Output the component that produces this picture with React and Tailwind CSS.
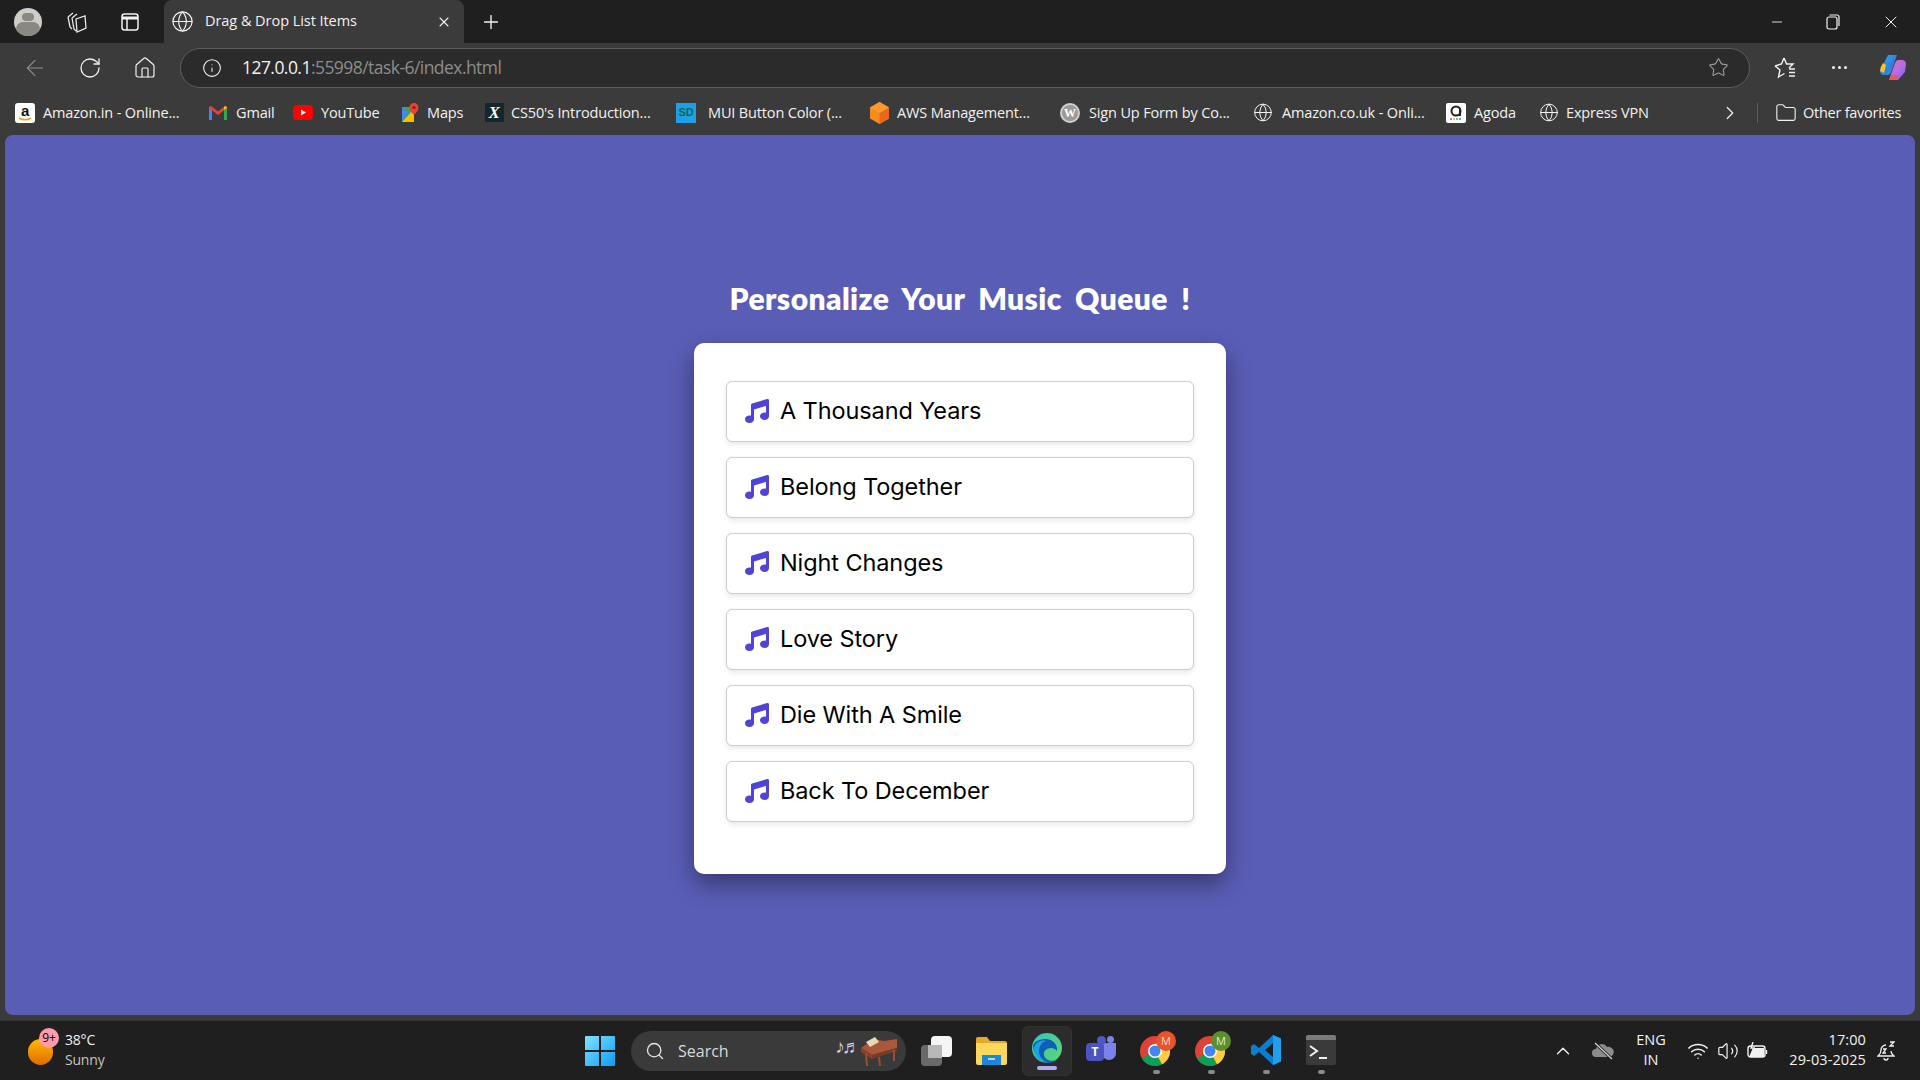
import { ArrowLeft, RotateCw, Home, Info, Star, Globe, Plus, X, Minus, ChevronRight, ChevronUp, Folder, Search, Wifi, Volume2 } from 'lucide-react';
import { FaMusic } from 'react-icons/fa6';

const songs = ['A Thousand Years', 'Belong Together', 'Night Changes', 'Love Story', 'Die With A Smile', 'Back To December'];

function Amazon() {
  return (
    <svg width="20" height="20" viewBox="0 0 20 20">
      <rect width="20" height="20" rx="3" fill="#fff" />
      <text x="10" y="13" textAnchor="middle" fontSize="15" fontWeight="700" fontFamily="Liberation Sans, sans-serif" fill="#111">a</text>
      <path d="M4 15q6 3.5 12 0" stroke="#f90" strokeWidth="1.6" fill="none" />
    </svg>
  );
}

function Gmail() {
  return (
    <svg width="20" height="16" viewBox="0 0 20 16">
      <path d="M1 15V3l3 2v10z" fill="#4285f4" />
      <path d="M19 15V3l-3 2v10z" fill="#34a853" />
      <path d="M1 3l9 7 9-7v-1l-2-1-7 5.500L3 1 1 2z" fill="#ea4335" />
      <path d="M16 5l3-2V2l-2-1-1 1z" fill="#fbbc04" />
    </svg>
  );
}

function YouTube() {
  return (
    <svg width="20" height="15" viewBox="0 0 20 15">
      <rect width="20" height="15" rx="4" fill="#f00" />
      <path d="M8 4.500l5 3-5 3z" fill="#fff" />
    </svg>
  );
}

function Maps() {
  return (
    <svg width="18" height="20" viewBox="0 0 18 20">
      <path d="M1 4h12v15H1z" fill="#34a853" />
      <path d="M1 19L13 6v13z" fill="#fbbc04" />
      <path d="M1 4l7 7-7 6z" fill="#4285f4" />
      <path d="M13 0a4.500 4.500 0 0 1 4.500 4.500C17.500 8 13 12 13 12S8.500 8 8.500 4.500A4.500 4.500 0 0 1 13 0z" fill="#ea4335" />
      <circle cx="13" cy="4.500" r="1.600" fill="#8c1a11" />
    </svg>
  );
}

function CsLogo() {
  return (
    <div className="w-[19px] h-[19px] bg-[#12282c] flex items-center justify-center text-white text-[17px] font-bold italic font-['Liberation_Serif',serif] leading-none">X</div>
  );
}

function Sd() {
  return (
    <div className="w-5 h-5 bg-[#1f9fe8] flex items-center justify-center text-[#0b6b5a] text-[11px] font-bold font-['Liberation_Sans',sans-serif]">SD</div>
  );
}

function Aws() {
  return (
    <svg width="19" height="22" viewBox="0 0 19 22">
      <path d="M9.500 0L19 5.500v11L9.500 22 0 16.500v-11z" fill="#f58b1f" />
      <path d="M9.500 11L19 5.500v11L9.500 22z" fill="#e8681f" />
      <path d="M9.500 0L19 5.500 9.500 11 0 5.500z" fill="#fb9a2c" />
    </svg>
  );
}

function Wp() {
  return (
    <div className="w-5 h-5 rounded-full bg-[#9a9a9a] border-2 border-[#cfcfcf] flex items-center justify-center text-white text-[12px] font-bold font-['Liberation_Serif',serif] leading-none">W</div>
  );
}

function Agoda() {
  return (
    <svg width="20" height="20" viewBox="0 0 20 20">
      <rect width="20" height="20" rx="2" fill="#fff" />
      <circle cx="10" cy="8" r="4.500" fill="none" stroke="#222" strokeWidth="2" />
      <path d="M14 6v7" stroke="#222" strokeWidth="2" />
      <circle cx="5" cy="16" r="1" fill="#e33" />
      <circle cx="8" cy="16" r="1" fill="#f90" />
      <circle cx="11" cy="16" r="1" fill="#4b4" />
      <circle cx="14" cy="16" r="1" fill="#37c" />
    </svg>
  );
}

const GlobeIcon = () => <Globe size={21} strokeWidth={1.2} color="#f2f2f2" />;

const bookmarks = [
  { icon: <Amazon />, label: 'Amazon.in - Online...', w: 'w-[193px]', gap: 'ml-2' },
  { icon: <Gmail />, label: 'Gmail', w: 'w-[85px]', gap: 'ml-2' },
  { icon: <YouTube />, label: 'YouTube', w: 'w-[107px]', gap: 'ml-2' },
  { icon: <Maps />, label: 'Maps', w: 'w-[84px]', gap: 'ml-[7px]' },
  { icon: <CsLogo />, label: "CS50's Introduction...", w: 'w-[192px]', gap: 'ml-[7px]' },
  { icon: <Sd />, label: 'MUI Button Color (...', w: 'w-[193px]', gap: 'ml-[12px]' },
  { icon: <Aws />, label: 'AWS Management...', w: 'w-[191px]', gap: 'ml-2' },
  { icon: <Wp />, label: 'Sign Up Form by Co...', w: 'w-[193px]', gap: 'ml-[9px]' },
  { icon: <GlobeIcon />, label: 'Amazon.co.uk - Onli...', w: 'w-[193px]', gap: 'ml-[9px]' },
  { icon: <Agoda />, label: 'Agoda', w: 'w-[93px]', gap: 'ml-2' },
  { icon: <GlobeIcon />, label: 'Express VPN', w: 'w-[180px]', gap: 'ml-[7px]' },
];

function TitleBar() {
  return (
    <div className="h-[43px] bg-[#1f1f1f] flex items-center text-[#f2f2f2]">
      <div className="w-7 h-7 ml-[14px] rounded-full bg-[#cfcdc8] overflow-hidden flex flex-col items-center">
        <div className="w-3 h-3 mt-[5px] rounded-full bg-[#8a8883]" />
        <div className="w-6 h-5 mt-[1px] rounded-full bg-[#8a8883]" />
      </div>
      <svg className="ml-[24px]" width="22" height="24" viewBox="0 0 22 24" fill="none" stroke="#e8e8e8" strokeWidth="1.300">
        <path d="M2 7l5-4M2 7l2 10 2 2M6 8l5-4M6 8l2 11 2 2M10 9l9-3 1 12-9 4-1-13z" />
      </svg>
      <svg className="ml-[33px]" width="18" height="18" viewBox="0 0 18 18" fill="none" stroke="#f2f2f2" strokeWidth="1.500">
        <rect x="1" y="1" width="16" height="16" rx="2.500" />
        <path d="M1 5h16" strokeWidth="3" />
        <path d="M6 5v12" />
      </svg>
      <div className="ml-[25px] w-[300px] h-[43px] bg-[#3b3b3b] rounded-t-lg flex items-center pl-[7px] pr-3">
        <Globe size={23} strokeWidth={1.200} color="#f2f2f2" />
        <span className="ml-[11px] mb-[2px] flex-1 text-[14.500px] font-['Open_Sans',sans-serif] tracking-[-0.05px]">Drag &amp; Drop List Items</span>
        <X size={16} strokeWidth={1.600} />
      </div>
      <Plus className="ml-[16px]" size={22} strokeWidth={1.500} />
      <div className="flex-1" />
      <Minus size={16} strokeWidth={1.300} />
      <svg className="ml-[41px]" width="14" height="16" viewBox="0 0 14 16" fill="none" stroke="#f2f2f2" strokeWidth="1.200">
        <rect x="1" y="3" width="10" height="12" rx="2" />
        <path d="M3.500 1H11a2 2 0 0 1 2 2v9" />
      </svg>
      <X className="ml-[41px] mr-[19px]" size={20} strokeWidth={1.200} />
    </div>
  );
}

function Toolbar() {
  return (
    <div className="h-[47px] pt-[2px] bg-[#3b3b3b] flex items-center text-[#f2f2f2]">
      <ArrowLeft className="ml-[22px]" size={26} strokeWidth={1} color="#8f8f8f" />
      <RotateCw className="ml-[30px]" size={24} strokeWidth={1.300} />
      <Home className="ml-[31px]" size={24} strokeWidth={1.200} />
      <div className="ml-[23px] w-[1570px] h-10 rounded-[20px] bg-[#2b2b2b] border border-[#5d5d5d] flex items-center pl-[21px] pr-[20px]">
        <Info size={20} strokeWidth={1.300} />
        <div className="ml-[20px] flex-1 text-[17.500px] font-['Open_Sans',sans-serif] tracking-[-0.55px]">
          <span>127.0.0.1</span>
          <span className="text-[#8d8d8d]">:55998/task-6/index.html</span>
        </div>
        <Star size={21} strokeWidth={1.200} color="#a0a0a0" />
      </div>
      <svg className="ml-[24px]" width="22" height="24" viewBox="0 0 22 24" fill="none" stroke="#f2f2f2" strokeWidth="1.400">
        <path d="M10 2l2.600 6H19l-4 4M1 10l5 4-1.500 7 6-3.500M10 2L7.500 8 1 10" />
        <path d="M15 13h6M15 16.500h6M15 20h6" />
      </svg>
      <div className="ml-[36px] flex gap-[3px]">
        <div className="w-[3px] h-[3px] rounded-full bg-[#f2f2f2]" />
        <div className="w-[3px] h-[3px] rounded-full bg-[#f2f2f2]" />
        <div className="w-[3px] h-[3px] rounded-full bg-[#f2f2f2]" />
      </div>
      <svg className="ml-[32px]" width="28" height="27" viewBox="0 0 28 27">
        <defs>
          <linearGradient id="cp1" x1="0" y1="0" x2="1" y2="1">
            <stop offset="0" stopColor="#2bb4f0" />
            <stop offset="0.600" stopColor="#2f7ce0" />
            <stop offset="1" stopColor="#37c98a" />
          </linearGradient>
          <linearGradient id="cp2" x1="0" y1="0" x2="1" y2="1">
            <stop offset="0" stopColor="#e86cc8" />
            <stop offset="0.600" stopColor="#b06ce8" />
            <stop offset="1" stopColor="#7a5ce0" />
          </linearGradient>
        </defs>
        <path d="M9 1h9l-6 17q-1 3-4 3H4q-3-1-3-4z" fill="url(#cp1)" />
        <path d="M1 17q0-4 3-8l3 2-2 8z" fill="#f3c52e" />
        <path d="M19 26h-9l6-17q1-3 4-3h4q3 1 3 4l-1 8z" fill="url(#cp2)" />
        <path d="M12 21h8l-3 5h-6z" fill="#f0584a" />
      </svg>
    </div>
  );
}

function BookmarksBar() {
  return (
    <div className="h-[45px] bg-[#3b3b3b] flex items-center text-[#f2f2f2] text-[14.500px] font-['Open_Sans',sans-serif] tracking-[-0.15px]">
      <div className="w-[15px]" />
      {bookmarks.map((b) => (
        <div key={b.label} className={'flex items-center ' + b.w}>
          <div className="w-5 h-[22px] flex items-center justify-center shrink-0">{b.icon}</div>
          <span className={b.gap + ' whitespace-nowrap'}>{b.label}</span>
        </div>
      ))}
      <ChevronRight size={22} strokeWidth={1.300} />
      <div className="ml-[16px] w-px h-5 bg-[#5d5d5d]" />
      <Folder className="ml-[17px]" size={22} strokeWidth={1.200} />
      <span className="ml-[6px] whitespace-nowrap tracking-[-0.25px]">Other favorites</span>
    </div>
  );
}

function Page() {
  return (
    <div className="h-[885px] bg-[#3b3b3b] pl-[5px] pr-[5px]">
      <main className="h-[880px] bg-[#5a5db6] rounded-lg flex flex-col items-center pt-[143px]">
        <h1 className="h-10 mb-[25px] text-[30px] leading-10 font-extrabold text-white font-['Lato',sans-serif] tracking-[0.4px] [word-spacing:6px]">
          Personalize Your Music Queue !
        </h1>
        <div className="w-[532px] h-[531px] bg-white rounded-[10px] shadow-[0_10px_25px_rgba(0,0,0,0.4)] pt-[38px] px-8">
          <ul className="flex flex-col gap-[15px]">
            {songs.map((song) => (
              <li key={song} className="h-[61px] border-[1.500px] border-[#cccccc] rounded-md bg-white shadow-[0_2px_5px_rgba(0,0,0,0.1)] flex items-center pl-[18px]">
                <FaMusic className="text-[#5243d8] mb-[1px]" size={24} />
                <span className="ml-[11px] text-[23.500px] text-black font-['Inter',sans-serif] tracking-[-0.1px] mb-[1px]">{song}</span>
              </li>
            ))}
          </ul>
        </div>
      </main>
    </div>
  );
}

function Chrome({ badge, letter }) {
  return (
    <div className="relative w-[32px] h-[32px]">
      <svg width="30" height="30" viewBox="0 0 30 30" className="mt-[2px]">
        <circle cx="15" cy="15" r="15" fill="#db4437" />
        <path d="M15 15L2 22.500A15 15 0 0 0 22 28.300z" fill="#0f9d58" />
        <path d="M15 15l7 13.300A15 15 0 0 0 28 7.500H15z" fill="#ffcd40" />
        <circle cx="15" cy="15" r="7" fill="#fff" />
        <circle cx="15" cy="15" r="5.500" fill="#4285f4" />
      </svg>
      <div className={'absolute -top-[3px] -right-[4px] w-5 h-5 rounded-full text-[11px] flex items-center justify-center font-[\'Open_Sans\',sans-serif] ' + badge}>{letter}</div>
    </div>
  );
}

function TaskIcon({ children }) {
  return (
    <div className="w-[32px] flex flex-col items-center">
      <div className="h-[43px] pt-[3px] flex items-center justify-center">{children}</div>
      <div className="w-[7px] h-1 rounded-sm bg-[#8a8a8a]" />
    </div>
  );
}

function Taskbar() {
  return (
    <div className="h-[60px] bg-[#1f1f1f] border-t border-[#333333] flex items-center text-[#f2f2f2] font-['Open_Sans',sans-serif]">
      <div className="relative ml-[28px] w-[25px] h-[26px] mt-[2px] rounded-full bg-gradient-to-b from-[#fdb900] to-[#e06a00]">
        <div className="absolute -top-[11px] left-[11px] w-5 h-5 rounded-full bg-[#ff9aa8] text-black text-[12px] leading-5 text-center">9+</div>
      </div>
      <div className="ml-[12px] w-[60px] text-[14px] leading-[20px] tracking-[-0.2px] mb-[1px]">
        <div>38°C</div>
        <div className="text-[#c4c4c4]">Sunny</div>
      </div>
      <svg className="ml-[460px]" width="30" height="30" viewBox="0 0 30 30">
        <defs>
          <linearGradient id="win" x1="0" y1="0" x2="1" y2="1">
            <stop offset="0" stopColor="#7de3ff" />
            <stop offset="1" stopColor="#0f9bf5" />
          </linearGradient>
        </defs>
        <path d="M0 1a1 1 0 0 1 1-1h13v14H0zM16 0h13a1 1 0 0 1 1 1v13H16zM0 16h14v14H1a1 1 0 0 1-1-1zM16 16h14v13a1 1 0 0 1-1 1H16z" fill="url(#win)" />
      </svg>
      <div className="ml-[16px] w-[275px] h-10 rounded-[20px] bg-[#3a3a3a] flex items-center pl-[14px] pr-[8px]">
        <Search size={20} strokeWidth={1.600} color="#e6e6e6" />
        <span className="ml-[13px] flex-1 text-[16px] text-[#d8d8d8]">Search</span>
        <span className="text-[19px] text-[#d0d0e8] leading-none mb-2 tracking-[-3px]">♪♬</span>
        <svg className="ml-[2px]" width="38" height="30" viewBox="0 0 38 30">
          <path d="M1 12L14 3l10 2 13-2v9L12 19z" fill="#a9583a" />
          <path d="M1 12l11 7v4L1 16z" fill="#8a4128" />
          <path d="M12 19l25-7v3L12 23z" fill="#7a3a24" />
          <path d="M6 6l9-5 4 5-9 5z" fill="#e8d9b8" />
          <path d="M5 17l2 0 1 13H6zM18 21h2l1 9h-2zM33 14h2v11h-2z" fill="#9b4e32" />
        </svg>
      </div>
      <div className="ml-[15px] w-[31px] h-[30px] relative">
        <div className="absolute left-0 bottom-0 w-[21px] h-[21px] rounded-sm bg-[#6a6a6a]" />
        <div className="absolute right-0 top-0 w-[21px] h-[21px] rounded-sm bg-[#f5f5f5]" />
        <div className="absolute left-[7px] top-[9px] w-[14px] h-[13px] bg-[#b8b8b8]" />
      </div>
      <svg className="ml-[24px]" width="31" height="28" viewBox="0 0 31 28">
        <path d="M0 2a2 2 0 0 1 2-2h9l3 4h15a2 2 0 0 1 2 2v3H0z" fill="#e3a92a" />
        <path d="M0 6h31v20a2 2 0 0 1-2 2H2a2 2 0 0 1-2-2z" fill="#fbd75b" />
        <path d="M6 18h19v10H6z" fill="#1b87d8" />
        <path d="M12 21h7v2h-7z" fill="#a8dcf8" />
      </svg>
      <div className="ml-[15px] w-[50px] h-[50px] rounded-md bg-[#2c2c2c] border border-[#333333] flex flex-col items-center">
        <svg className="mt-[6px]" width="30" height="30" viewBox="0 0 30 30">
          <defs>
            <linearGradient id="edge" x1="0" y1="0" x2="1" y2="1">
              <stop offset="0" stopColor="#33c6c0" />
              <stop offset="1" stopColor="#5fd66a" />
            </linearGradient>
          </defs>
          <circle cx="15" cy="15" r="15" fill="url(#edge)" />
          <path d="M1 13C2 24 10 30 17 30c3 0 6-1 8-3-6 2-12 0-13-5-1-4 3-7 7-7 2 0 5 1 6 3 1-8-6-12-11-12C8 6 2 8 1 13z" fill="#0f5fb8" />
          <path d="M2 16c0-5 6-10 12-8-4 1-7 5-7 10 0 5 3 9 8 11C8 29 2 24 2 16z" fill="#19a4e0" />
        </svg>
        <div className="w-5 h-1 mt-[3px] rounded-sm bg-[#b4aef0]" />
      </div>
      <div className="ml-[14px] w-[32px] h-[30px] relative">
        <div className="absolute left-[16px] top-[7px] w-[14px] h-[17px] rounded-b-lg bg-[#7b83eb]" />
        <div className="absolute left-[21px] top-0 w-[7px] h-[7px] rounded-full bg-[#7b83eb]" />
        <div className="absolute left-[11px] top-0 w-[9px] h-[9px] rounded-full bg-[#5059c9]" />
        <div className="absolute left-0 top-[7px] w-[18px] h-[18px] rounded-sm bg-[#4b53bc] text-white text-[12px] font-bold leading-[18px] text-center">T</div>
      </div>
      <div className="ml-[22px]">
        <TaskIcon><Chrome badge="bg-[#e8532b] text-[#ffd9cc]" letter="M" /></TaskIcon>
      </div>
      <div className="ml-[23px]">
        <TaskIcon><Chrome badge="bg-[#5d8f2e] text-[#d8eec4]" letter="M" /></TaskIcon>
      </div>
      <div className="ml-[23px]">
        <TaskIcon>
          <svg width="30" height="30" viewBox="0 0 30 30">
            <path d="M22 0l8 3.500v23L22 30 8 17l-5 4-3-2V11l3-2 5 4z" fill="#0a7fd0" />
            <path d="M22 0l8 3.500v23L22 30z" fill="#1fa0ee" />
            <path d="M22 8l-8 7 8 7z" fill="#1f1f1f" />
          </svg>
        </TaskIcon>
      </div>
      <div className="ml-[23px]">
        <TaskIcon>
          <svg width="30" height="30" viewBox="0 0 30 30">
            <rect width="30" height="30" rx="2" fill="#3a3a3a" />
            <path d="M0 2a2 2 0 0 1 2-2h26a2 2 0 0 1 2 2v3H0z" fill="#7a7a7a" />
            <path d="M4 11l7 5-7 5" fill="none" stroke="#f2f2f2" strokeWidth="2" />
            <path d="M13 23h8" stroke="#f2f2f2" strokeWidth="2" />
          </svg>
        </TaskIcon>
      </div>
      <div className="flex-1" />
      <ChevronUp size={22} strokeWidth={1.500} />
      <svg className="ml-[18px]" width="22" height="18" viewBox="0 0 22 18">
        <path d="M4 15a4 4 0 0 1 0-8 6 6 0 0 1 11-2 5 5 0 0 1 3 10z" fill="#8c8c8c" />
        <path d="M3 1l17 16" stroke="#1f1f1f" strokeWidth="3" />
        <path d="M3 1l17 16" stroke="#d8d8d8" strokeWidth="1.200" />
      </svg>
      <div className="ml-[17px] w-[40px] text-center text-[14.500px] leading-[20px] mb-[1px]">
        <div>ENG</div>
        <div>IN</div>
      </div>
      <Wifi className="ml-[16px]" size={22} strokeWidth={1.600} />
      <Volume2 className="ml-[8px]" size={22} strokeWidth={1.300} />
      <svg className="ml-[8px]" width="21" height="18" viewBox="0 0 21 18" fill="none" stroke="#f2f2f2" strokeWidth="1.400">
        <rect x="1" y="4" width="17" height="11" rx="2.500" />
        <path d="M19.500 8v4" />
        <path d="M2 15l4-9h11v9z" fill="#f2f2f2" stroke="none" />
        <path d="M6 0L4 6h3l-2 4" />
      </svg>
      <div className="ml-[1px] w-[97px] text-right text-[14.500px] leading-[20px] tracking-[0.1px] mb-[2px]">
        <div>17:00</div>
        <div>29-03-2025</div>
      </div>
      <svg className="ml-[11px] mr-[25px]" width="18" height="20" viewBox="0 0 18 20" fill="none" stroke="#f2f2f2" strokeWidth="1.300">
        <path d="M9 4a5 5 0 0 0-5 5c0 4-2 5-3 6h16c-1-1-3-2-3-5" />
        <path d="M7 17a2 2 0 0 0 4 0" />
        <path d="M6 8h3l-3 4h3M13 1h4l-4 4h4" />
      </svg>
    </div>
  );
}

export default function App() {
  return (
    <div className="w-[1920px] h-[1080px] overflow-hidden">
      <TitleBar />
      <Toolbar />
      <BookmarksBar />
      <Page />
      <Taskbar />
    </div>
  );
}
